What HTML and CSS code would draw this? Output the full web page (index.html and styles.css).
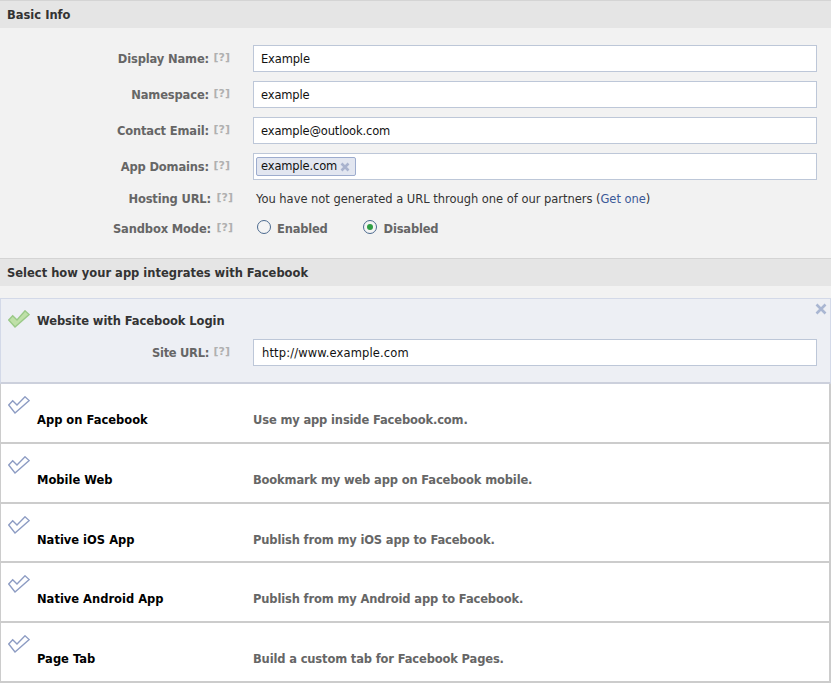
FILE: index.html
```html
<!DOCTYPE html>
<html lang="en">
<head>
<meta charset="utf-8">
<title>Basic Info</title>
<link rel="stylesheet" href="styles.css">
</head>
<body>
<svg class="defs" width="0" height="0" aria-hidden="true">
  <symbol id="check-outline" viewBox="0 0 22 18">
    <path d="M0.7 9 L4.7 4.7 L9 9 L17 0.8 L21.2 4.6 L7 17 Z" fill="#fff" stroke="#8d9cc3" stroke-width="1.4"/>
  </symbol>
  <symbol id="check-green" viewBox="0 0 22 18">
    <path d="M0.7 10 L4.7 5.7 L9 10 L17 0.8 L21.2 4.6 L7 17 Z" fill="#bfe0a8" stroke="#9ac987" stroke-width="1.4"/>
  </symbol>
</svg>
<section>
  <h2 class="section-head first">Basic Info</h2>
  <div class="form">
    <div class="row">
      <div class="label"><b>Display Name:</b><span class="help">[?]</span></div>
      <div class="input">Example</div>
    </div>
    <div class="row">
      <div class="label"><b>Namespace:</b><span class="help">[?]</span></div>
      <div class="input">example</div>
    </div>
    <div class="row">
      <div class="label"><b>Contact Email:</b><span class="help">[?]</span></div>
      <div class="input">example@outlook.com</div>
    </div>
    <div class="row">
      <div class="label"><b>App Domains:</b><span class="help">[?]</span></div>
      <div class="input tokens"><span class="token">example.com<svg class="token-x" viewBox="0 0 10 10" width="10" height="10"><path d="M1.5 1.5 L8.5 8.5 M8.5 1.5 L1.5 8.5" stroke="#a9b3ce" stroke-width="2.6"/></svg></span></div>
    </div>
    <div class="row plain hosting">
      <div class="label wide"><b>Hosting URL:</b><span class="help">[?]</span></div>
      <div class="value">You have not generated a URL through one of our partners (<a href="#">Get one</a>)</div>
    </div>
    <div class="row plain sandbox">
      <div class="label wide"><b>Sandbox Mode:</b><span class="help">[?]</span></div>
      <div class="radios">
        <span class="radio-item"><span class="radio"></span><b>Enabled</b></span>
        <span class="radio-item"><span class="radio on"></span><b>Disabled</b></span>
      </div>
    </div>
  </div>
</section>
<section>
  <h2 class="section-head">Select how your app integrates with Facebook</h2>
  <div class="integrations">
    <div class="panel">
      <svg class="close" viewBox="0 0 12 12" width="12" height="12"><path d="M1.5 1.5 L10.5 10.5 M10.5 1.5 L1.5 10.5" stroke="#a9b6d2" stroke-width="2.6"/></svg>
      <div class="panel-title"><svg class="check" width="22" height="18"><use href="#check-green"/></svg><b>Website with Facebook Login</b></div>
      <div class="row site">
        <div class="label"><b>Site URL:</b><span class="help">[?]</span></div>
        <div class="input">http://www.example.com</div>
      </div>
    </div>
    <div class="option"><svg class="check" width="22" height="18"><use href="#check-outline"/></svg><b class="name">App on Facebook</b><b class="desc">Use my app inside Facebook.com.</b></div>
    <div class="option"><svg class="check" width="22" height="18"><use href="#check-outline"/></svg><b class="name">Mobile Web</b><b class="desc">Bookmark my web app on Facebook mobile.</b></div>
    <div class="option short"><svg class="check" width="22" height="18"><use href="#check-outline"/></svg><b class="name">Native iOS App</b><b class="desc">Publish from my iOS app to Facebook.</b></div>
    <div class="option"><svg class="check" width="22" height="18"><use href="#check-outline"/></svg><b class="name">Native Android App</b><b class="desc">Publish from my Android app to Facebook.</b></div>
    <div class="option"><svg class="check" width="22" height="18"><use href="#check-outline"/></svg><b class="name">Page Tab</b><b class="desc">Build a custom tab for Facebook Pages.</b></div>
  </div>
</section>
</body>
</html>
```
FILE: styles.css
```css
* { box-sizing: border-box; }
html, body { margin: 0; padding: 0; }
body {
  width: 831px;
  height: 683px;
  overflow: hidden;
  background: #f2f2f2;
  font: 11.5px/16px "DejaVu Sans", "Liberation Sans", sans-serif;
  color: #333;
}
.defs { position: absolute; }
.section-head {
  margin: 0;
  height: 28px;
  padding: 0 7px;
  background: #e5e5e5;
  border-top: 1px solid #d4d4d4;
  font-size: 11.5px;
  font-weight: bold;
  line-height: 28px;
  color: #333;
}
.form { padding: 17px 14px 0 0; height: 230px; }
.row { display: flex; align-items: center; height: 27px; margin-bottom: 9px; }
.label { width: 253px; flex: none; display: flex; justify-content: flex-end; padding-right: 44px; position: relative; color: #666; }
.label b { font-weight: bold; padding-top: 1px; letter-spacing: -0.15px; }
.help { position: absolute; right: 23px; top: 0; color: #b0b0b0; font-size: 11px; font-weight: bold; }
.label.wide { width: 247px; margin-right: 9px; padding-right: 36px; }
.label.wide .help { right: 14px; }
.input {
  flex: 1;
  height: 27px;
  background: #fff;
  border: 1px solid #bdc7d8;
  padding: 1px 7px 0;
  line-height: 25px;
  color: #111;
  letter-spacing: -0.15px;
}
.tokens { padding: 3px 2px; line-height: 17px; }
.token {
  display: inline-flex;
  align-items: center;
  gap: 3px;
  height: 19px;
  padding: 0 5px 0 4px;
  background: #e2e6f0;
  border: 1px solid #9dacce;
  border-radius: 2px;
}
.plain { height: 16px; }
.hosting { margin-top: 10px; margin-bottom: 14px; }
.value { color: #333; white-space: nowrap; padding-top: 1px; letter-spacing: -0.03px; }
.value a { color: #3b5998; text-decoration: none; }
.radios { display: flex; gap: 34px; color: #666; padding-top: 1px; }
.radio-item { display: flex; align-items: center; gap: 6px; }
.radio-item + .radio-item { gap: 7px; }
.radio-item b { padding-top: 1px; letter-spacing: -0.2px; }
.radio { width: 14px; height: 14px; margin: -4px 0 0 1px; border: 1px solid #4c6a8f; border-radius: 50%; background: #f4f4f4; display: inline-block; position: relative; }
.radio.on::after { content: ""; position: absolute; left: 3px; top: 3px; width: 6px; height: 6px; border-radius: 50%; background: #2f9e44; }
.integrations { padding-top: 12px; }
.panel {
  position: relative;
  height: 86px;
  background: #edeff4;
  border: 1px solid #d3d9e8;
  border-bottom: 2px solid #ccd0dc;
  padding: 0 13px 0 0;
}
.close { position: absolute; top: 4px; right: 3px; }
.panel-title { display: flex; align-items: center; height: 40px; padding-left: 7px; }
.panel-title b { margin-left: 7px; padding-top: 3px; letter-spacing: -0.07px; }
.check { flex: none; }
.site { margin: 0; }
.site .label { width: 252px; }
.site .label b { letter-spacing: -0.3px; }
.site .input { padding-left: 8px; letter-spacing: 0.14px; }
.option {
  position: relative;
  height: 60px;
  background: #fff;
  border: 1px solid #ccc;
  border-width: 0 2px 2px 1px;
  display: flex;
  align-items: flex-start;
}
.short { height: 59px; }
.option .check { position: absolute; left: 7px; top: 12px; }
.option b { padding-top: 28px; }
.name { width: 252px; padding-left: 36px; color: #000; }
.desc { color: #666; letter-spacing: -0.15px; }
```
